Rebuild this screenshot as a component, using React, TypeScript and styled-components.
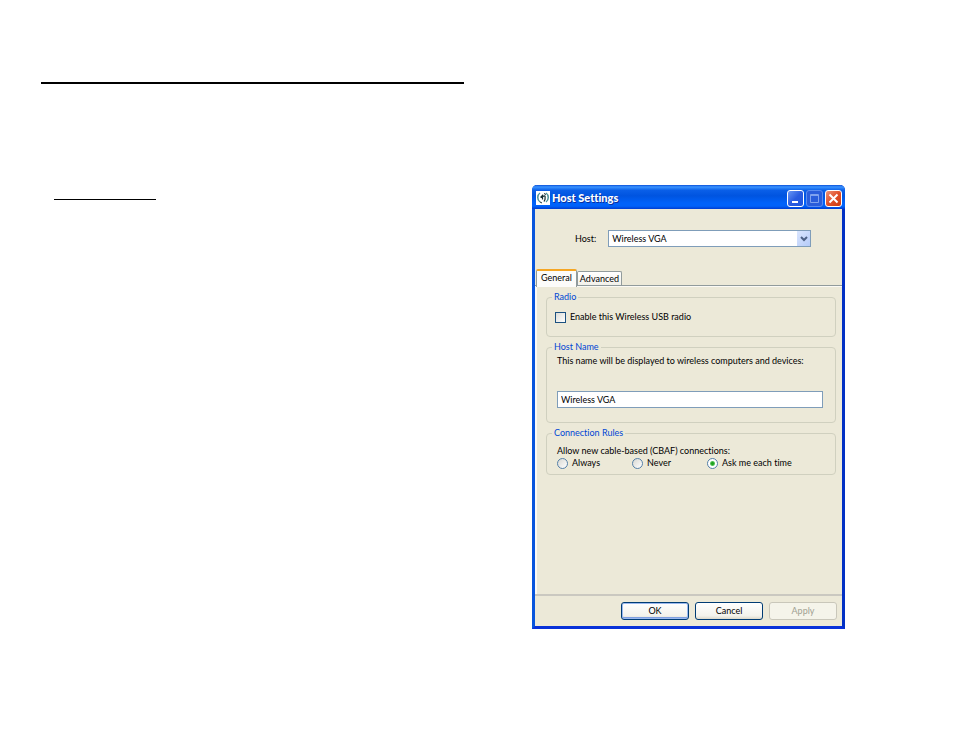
import React, { useState } from "react";
import styled, { createGlobalStyle, css } from "styled-components";

const GlobalStyle = createGlobalStyle`
  * { box-sizing: border-box; }
  body {
    margin: 0;
    background: #fff;
    color: #000;
    font: 9px/12px Lato, "Liberation Sans", sans-serif;
    font-variant-ligatures: none;
  }
  button, input, select { font: inherit; color: inherit; font-variant-ligatures: none; }
`;

const Page = styled.main`
  display: grid;
  grid-template-columns: minmax(0, 423fr) minmax(0, 313fr);
  column-gap: 68px;
  align-items: start;
  padding: 82px 109px 40px 41px;
`;

const Notes = styled.section`
  display: flex;
  flex-direction: column;
  gap: 115px;
`;

const Rule = styled.hr<{ $short?: boolean }>`
  margin: 0;
  border: 0;
  background: #000;
  height: ${(p) => (p.$short ? 1 : 2)}px;
  width: ${(p) => (p.$short ? "24%" : "100%")};
  margin-left: ${(p) => (p.$short ? 13 : 0)}px;
`;

const Window = styled.section`
  margin-top: 103px;
  background: #ece9d8;
  border: solid;
  border-width: 0 3px 3px;
  border-color: #0831d9 #0230c4 #0831d9 #0855dd;
  border-radius: 5px 5px 0 0;
`;

const TitleBar = styled.header`
  display: flex;
  align-items: center;
  gap: 2px;
  height: 24px;
  margin: 0 -3px;
  padding: 2px 3px 0 4px;
  border-radius: 5px 5px 0 0;
  background: linear-gradient(#0a4fd8 0, #3a93ff 8%, #0a5fe8 22%, #0054e0 45%, #0062fa 75%, #0062fa 88%, #003dd0 100%);
`;

const Title = styled.h1`
  flex: 1;
  margin: 0;
  color: #fff;
  font: 900 11px/14px Lato, "Open Sans", sans-serif;
  font-variant-ligatures: none;
  text-shadow: 1px 1px 0 #0a2f9c;
`;

const CaptionButton = styled.button<{ $kind: "min" | "max" | "close" }>`
  display: grid;
  place-items: center;
  width: 17px;
  height: 17px;
  padding: 0;
  border: 1px solid #fff;
  border-radius: 3px;
  background: linear-gradient(135deg, #6a97f5, #2a5ce0 50%, #1f55dd);
  ${(p) => p.$kind === "max" && css`border-color: #5b8cf0; background: #2a5ddb;`}
  ${(p) => p.$kind === "close" && css`background: linear-gradient(135deg, #f0957a, #e0502a 50%, #cc3c12);`}
`;

const HostRow = styled.div`
  display: flex;
  align-items: center;
  gap: 12px;
  padding: 21px 31px 21px 40px;
`;

const SelectBox = styled.div`
  position: relative;
  flex: 1;
  display: flex;
`;

const HostSelect = styled.select`
  appearance: none;
  width: 100%;
  height: 17px;
  padding: 0 18px 0 3px;
  border: 1px solid #7f9db9;
  border-radius: 0;
  background: #fff;
`;

const Arrow = styled.span`
  position: absolute;
  right: 1px;
  top: 1px;
  bottom: 1px;
  width: 13px;
  display: grid;
  place-items: center;
  background: linear-gradient(135deg, #dbe6fe, #b5cbf8);
  pointer-events: none;
`;

const Tabs = styled.div`
  display: flex;
  align-items: flex-end;
  padding-left: 1px;
  height: 17px;
`;

const Tab = styled.button<{ $active: boolean }>`
  height: 14px;
  padding: 0 2px;
  line-height: 12px;
  white-space: nowrap;
  border: 1px solid #919b9c;
  border-bottom: 0;
  border-radius: 2px 2px 0 0;
  background: linear-gradient(#fff, #f2f1ea);
  ${(p) =>
    p.$active &&
    css`
      position: relative;
      height: 18px;
      margin-bottom: -2px;
      padding: 0 4px 3px;
      border-top: 2px solid #f5a623;
      background: #fcfcfa;
    `}
`;

const Pane = styled.div`
  display: flex;
  flex-direction: column;
  gap: 4px;
  min-height: 311px;
  padding: 5px 6px 10px 11px;
  border: solid #919b9c;
  border-width: 1px 0 0;
  border-bottom: 2px solid #cac8c0;
  box-shadow: inset 2px 1px 0 #fbfaf5;
`;

const Group = styled.fieldset<{ $pad: string }>`
  min-width: 0;
  margin: 0;
  padding: ${(p) => p.$pad};
  border: 1px solid #d0d0bf;
  border-radius: 4px;
`;

const Legend = styled.legend<{ $inset: number }>`
  margin-left: -${(p) => p.$inset}px;
  padding: 0 2px;
  color: #0046d5;
`;

const Choice = styled.label`
  display: flex;
  align-items: center;
  gap: 4px;
  white-space: nowrap;
`;

const Check = styled.input`
  appearance: none;
  width: 11px;
  height: 11px;
  margin: 0;
  border: 1px solid #1c5180;
  background: linear-gradient(135deg, #dcdcd7, #fff);
  &:checked { background: #21a121; box-shadow: inset 0 0 0 2px #fff; }
`;

const Radio = styled.input`
  appearance: none;
  width: 11px;
  height: 11px;
  margin: 0;
  border: 1px solid #5580a8;
  border-radius: 50%;
  background: linear-gradient(135deg, #d8d8d2, #fff);
  &:checked { background: radial-gradient(circle, #21a121 0 1px, #55c455 2px, #fff 3px); }
`;

const Radios = styled.div`
  display: grid;
  grid-template-columns: 75fr 75fr 118fr;
`;

const TextLine = styled.label`
  display: block;
  white-space: nowrap;
`;

const NameInput = styled.input`
  display: block;
  width: 100%;
  height: 17px;
  margin-top: 24px;
  padding: 0 3px;
  border: 1px solid #7f9db9;
  background: #fff;
`;

const Footer = styled.footer`
  display: flex;
  justify-content: flex-end;
  gap: 6px;
  padding: 6px 5px;
`;

const PushButton = styled.button<{ $primary?: boolean }>`
  width: 68px;
  height: 18px;
  padding: 0;
  border: 1px solid #003c74;
  border-radius: 3px;
  background: linear-gradient(#fff, #f3f2ec 80%, #dcd8ca);
  ${(p) => p.$primary && css`box-shadow: inset 0 0 0 1px #9ab8ee, inset 0 -2px 0 #7f9fe0;`}
  &:disabled {
    color: #a1a192;
    border-color: #c9c7ba;
    background: #f5f4ea;
  }
`;

const rules = ["Always", "Never", "Ask me each time"];

export default function App() {
  const [tab, setTab] = useState("General");
  const [rule, setRule] = useState(rules[2]);
  const [name, setName] = useState("Wireless VGA");

  return (
    <>
      <GlobalStyle />
      <Page>
        <Notes>
          <Rule />
          <Rule $short />
        </Notes>
        <Window>
          <TitleBar>
            <svg width="14" height="14" viewBox="0 0 14 14" fill="none" aria-hidden="true">
              <path fill="#fff" d="M0 0h14v14H0z" />
              <path stroke="#4b9298" strokeWidth="1.5" d="M4 2C1 4 1 9 4 11M10 2c3 2 3 7 0 9" />
              <path stroke="#142e32" strokeWidth="1.2" d="M4.500 6.500l2-2v4M7 5.500c3-2 2 1 2 3l-1 2" />
              <path stroke="#142e32" d="M8 2.500l2 1M4 11l2 1" />
            </svg>
            <Title>Host Settings</Title>
            <CaptionButton $kind="min" aria-label="Minimize">
              <svg width="13" height="13"><path fill="#fff" d="M3 9h6v2H3z" /></svg>
            </CaptionButton>
            <CaptionButton $kind="max" aria-label="Maximize" disabled>
              <svg width="13" height="13" fill="none" stroke="#7fa2ef"><path d="M2.5 2.5h8v8h-8zM2 3.5h9" /></svg>
            </CaptionButton>
            <CaptionButton $kind="close" aria-label="Close">
              <svg width="13" height="13"><path d="M2.5 2.5l8 8M10.500 2.5l-8 8" stroke="#fff" strokeWidth="2" /></svg>
            </CaptionButton>
          </TitleBar>
          <HostRow>
            <label htmlFor="host">Host:</label>
            <SelectBox>
              <HostSelect id="host"><option>Wireless VGA</option></HostSelect>
              <Arrow>
                <svg width="8" height="6" fill="none"><path d="M1 1l3 3 3-3" stroke="#4d6185" strokeWidth="2" /></svg>
              </Arrow>
            </SelectBox>
          </HostRow>
          <Tabs role="tablist">
            {["General", "Advanced"].map((t) => (
              <Tab key={t} role="tab" aria-selected={tab === t} $active={tab === t} onClick={() => setTab(t)}>{t}</Tab>
            ))}
          </Tabs>
          <Pane>
            <Group $pad="8px 8px 13px">
              <Legend $inset={3}>Radio</Legend>
              <Choice><Check type="checkbox" />Enable this Wireless USB radio</Choice>
            </Group>
            <Group $pad="2px 12px 14px 10px">
              <Legend $inset={5}>Host Name</Legend>
              <TextLine htmlFor="name">This name will be displayed to wireless computers and devices:</TextLine>
              <NameInput id="name" value={name} onChange={(e) => setName(e.target.value)} />
            </Group>
            <Group $pad="6px 10px 5px">
              <Legend $inset={5}>Connection Rules</Legend>
              <TextLine as="div" id="rules">Allow new cable-based (CBAF) connections:</TextLine>
              <Radios role="radiogroup" aria-labelledby="rules">
                {rules.map((r) => (
                  <Choice key={r}>
                    <Radio type="radio" name="rule" checked={rule === r} onChange={() => setRule(r)} />{r}
                  </Choice>
                ))}
              </Radios>
            </Group>
          </Pane>
          <Footer>
            <PushButton $primary>OK</PushButton>
            <PushButton>Cancel</PushButton>
            <PushButton disabled>Apply</PushButton>
          </Footer>
        </Window>
      </Page>
    </>
  );
}
